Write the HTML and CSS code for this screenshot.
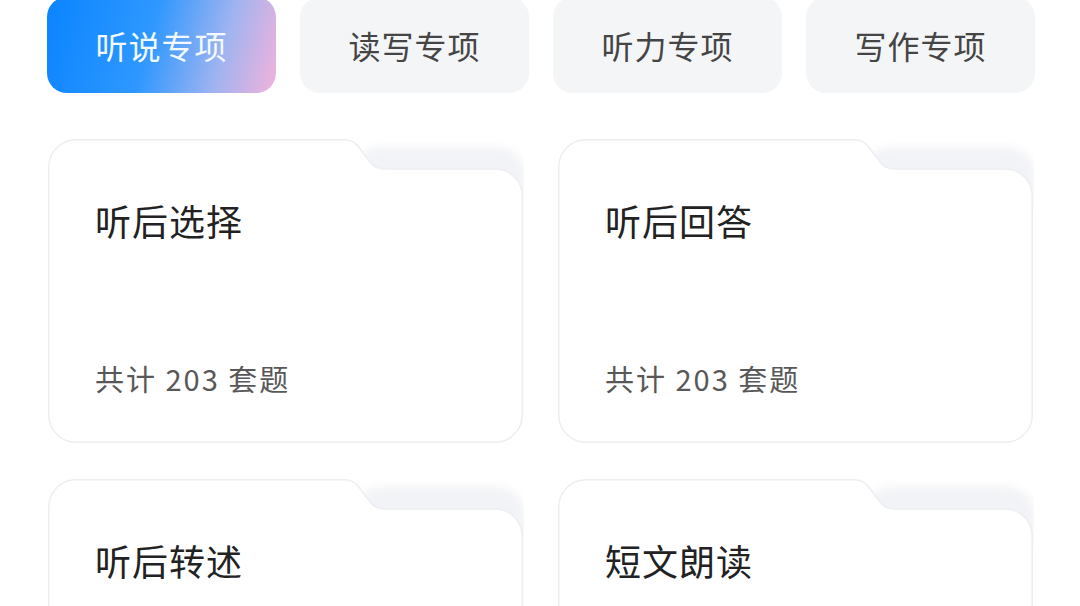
FILE: index.html
```html
<!DOCTYPE html>
<html lang="zh">
<head>
<meta charset="utf-8">
<link rel="stylesheet" href="styles.css">
</head>
<body>
<div class="page">
  <div class="tabs">
    <div class="tab active">听说专项</div>
    <div class="tab">读写专项</div>
    <div class="tab">听力专项</div>
    <div class="tab">写作专项</div>
  </div>
  <div class="cards">
    <div class="card">
      <svg class="shape" viewBox="0 0 476 305" aria-hidden="true">
        <defs><filter id="b1" x="-20%" y="-50%" width="140%" height="200%"><feGaussianBlur stdDeviation="5"/></filter></defs>
        <rect x="305" y="8" width="172" height="70" rx="28" fill="#f2f3f6" filter="url(#b1)"/>
        <path d="M0.75,28 A27.25,27.25 0 0 1 28,0.75 L296,0.75 Q305,0.75 310,7 L322,23 Q327,30 337,30 L447,30 A27.25,27.25 0 0 1 474.25,57.25 L474.25,276 A27.25,27.25 0 0 1 447,303.25 L28,303.25 A27.25,27.25 0 0 1 0.75,276 Z" fill="#fff" stroke="#eceef1" stroke-width="1.5"/>
      </svg>
      <div class="title">听后选择</div>
      <div class="meta">共计 203 套题</div>
    </div>
    <div class="card">
      <svg class="shape" viewBox="0 0 476 305" aria-hidden="true">
        <defs><filter id="b2" x="-20%" y="-50%" width="140%" height="200%"><feGaussianBlur stdDeviation="5"/></filter></defs>
        <rect x="305" y="8" width="172" height="70" rx="28" fill="#f2f3f6" filter="url(#b2)"/>
        <path d="M0.75,28 A27.25,27.25 0 0 1 28,0.75 L296,0.75 Q305,0.75 310,7 L322,23 Q327,30 337,30 L447,30 A27.25,27.25 0 0 1 474.25,57.25 L474.25,276 A27.25,27.25 0 0 1 447,303.25 L28,303.25 A27.25,27.25 0 0 1 0.75,276 Z" fill="#fff" stroke="#eceef1" stroke-width="1.5"/>
      </svg>
      <div class="title">听后回答</div>
      <div class="meta">共计 203 套题</div>
    </div>
    <div class="card">
      <svg class="shape" viewBox="0 0 476 305" aria-hidden="true">
        <defs><filter id="b3" x="-20%" y="-50%" width="140%" height="200%"><feGaussianBlur stdDeviation="5"/></filter></defs>
        <rect x="305" y="8" width="172" height="70" rx="28" fill="#f2f3f6" filter="url(#b3)"/>
        <path d="M0.75,28 A27.25,27.25 0 0 1 28,0.75 L296,0.75 Q305,0.75 310,7 L322,23 Q327,30 337,30 L447,30 A27.25,27.25 0 0 1 474.25,57.25 L474.25,276 A27.25,27.25 0 0 1 447,303.25 L28,303.25 A27.25,27.25 0 0 1 0.75,276 Z" fill="#fff" stroke="#eceef1" stroke-width="1.5"/>
      </svg>
      <div class="title">听后转述</div>
    </div>
    <div class="card">
      <svg class="shape" viewBox="0 0 476 305" aria-hidden="true">
        <defs><filter id="b4" x="-20%" y="-50%" width="140%" height="200%"><feGaussianBlur stdDeviation="5"/></filter></defs>
        <rect x="305" y="8" width="172" height="70" rx="28" fill="#f2f3f6" filter="url(#b4)"/>
        <path d="M0.75,28 A27.25,27.25 0 0 1 28,0.75 L296,0.75 Q305,0.75 310,7 L322,23 Q327,30 337,30 L447,30 A27.25,27.25 0 0 1 474.25,57.25 L474.25,276 A27.25,27.25 0 0 1 447,303.25 L28,303.25 A27.25,27.25 0 0 1 0.75,276 Z" fill="#fff" stroke="#eceef1" stroke-width="1.5"/>
      </svg>
      <div class="title">短文朗读</div>
    </div>
  </div>
</div>
</body>
</html>
```

FILE: styles.css
```css
html, body {
  margin: 0;
  padding: 0;
  background: #ffffff;
  overflow: hidden;
}
body {
  font-family: "Noto Sans CJK SC", "Noto Sans", sans-serif;
  width: 1080px;
  height: 606px;
}
.page {
  padding: 0 45px 0 47px;
  margin-top: -3px;
}
.tabs {
  display: grid;
  grid-template-columns: repeat(4, 229px);
  column-gap: 24px;
}
.tab {
  height: 96px;
  border-radius: 20px;
  background: #f4f5f7;
  color: #454545;
  font-size: 32px;
  display: flex;
  align-items: center;
  justify-content: center;
  letter-spacing: 1px;
}
.tab.active {
  background: linear-gradient(105deg, #0a84ff 0%, #2f98ff 45%, #9fb4f0 75%, #f2b2dc 100%);
  color: #f4f9ff;
}
.cards {
  margin-top: 46px;
  display: grid;
  grid-template-columns: repeat(2, 476px);
  column-gap: 34px;
  row-gap: 35px;
  margin-left: 1px;
}
.card {
  position: relative;
  height: 305px;
  padding: 58px 47px 48px;
  box-sizing: border-box;
  display: flex;
  flex-direction: column;
  justify-content: space-between;
}
.shape {
  position: absolute;
  left: 0;
  top: 0;
  width: 476px;
  height: 305px;
  z-index: 0;
}
.title, .meta {
  position: relative;
  z-index: 1;
}
.title {
  font-size: 36px;
  line-height: 46px;
  color: #222222;
  letter-spacing: 1px;
}
.meta {
  font-size: 29px;
  line-height: 36px;
  color: #585858;
  letter-spacing: 2px;
}
```
